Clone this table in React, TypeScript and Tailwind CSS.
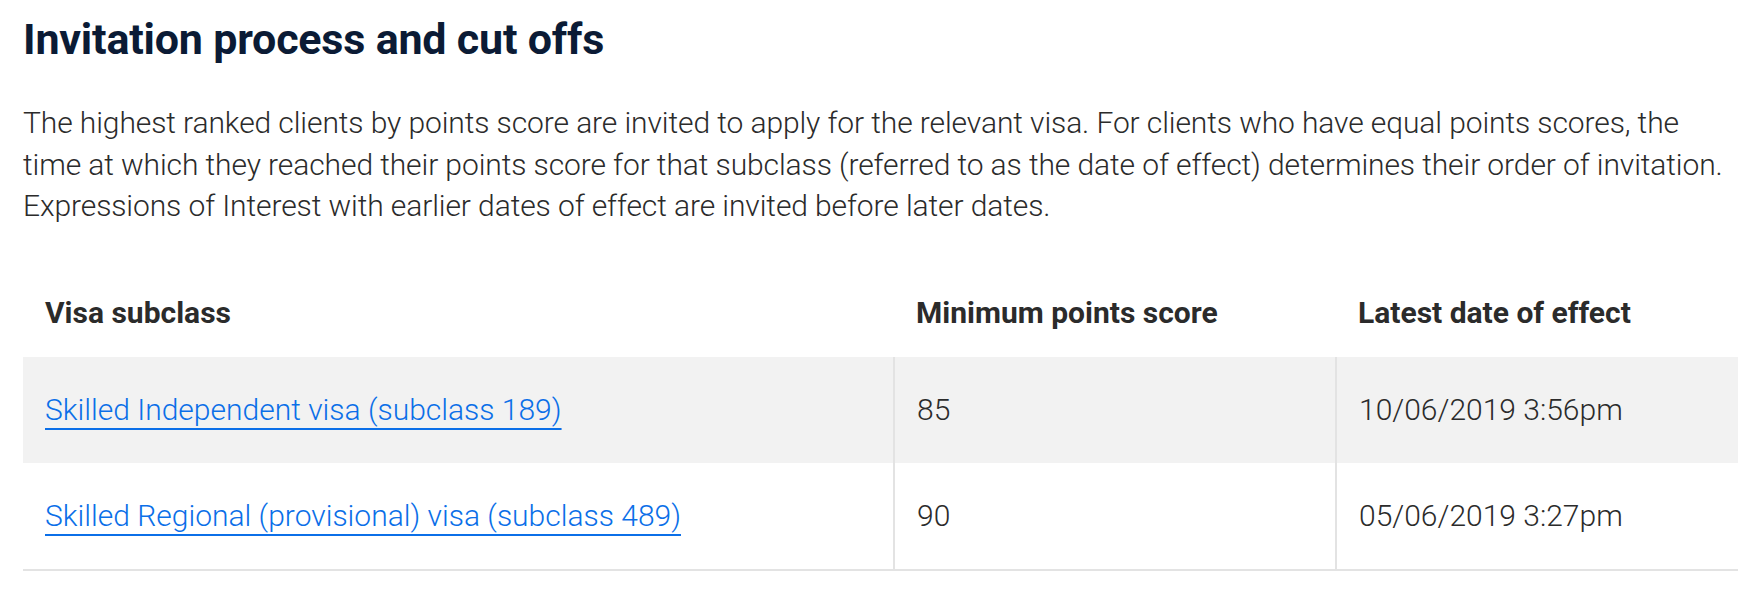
import React from 'react';

const ROWS = [
  { visa: 'Skilled Independent visa (subclass 189)', points: '85', date: '10/06/2019 3:56pm' },
  { visa: 'Skilled Regional (provisional) visa (subclass 489)', points: '90', date: '05/06/2019 3:27pm' },
];

const App: React.FC = () => {
  return (
    <div className="w-[1738px] h-[610px] overflow-hidden bg-white pl-[23px] font-['Roboto',sans-serif]">
      <h1 className="pt-[15px] text-[43px] leading-[48px] font-bold text-[#0b1b35] tracking-[-0.2px]">
        Invitation process and cut offs
      </h1>

      {/* line breaks kept as in the source page */}
      <p className="mt-[39px] whitespace-nowrap text-[30px] leading-[41.5px] tracking-[-0.1px] font-light text-[#2b2b2b]">
        The highest ranked clients by points score are invited to apply for the relevant visa. For clients who have equal points scores, the
        <br />
        time at which they reached their points score for that subclass (referred to as the date of effect) determines their order of invitation.
        <br />
        Expressions of Interest with earlier dates of effect are invited before later dates.
      </p>

      <table className="mt-[42px] w-[1715px] table-fixed border-collapse text-[30px] text-[#2b2b2b]">
        <colgroup>
          <col className="w-[871px]" />
          <col className="w-[442px]" />
          <col className="w-[402px]" />
        </colgroup>
        <thead>
          <tr>
            <th className="px-[22px] py-[24px] text-left font-bold leading-[40px]">Visa subclass</th>
            <th className="px-[22px] py-[24px] text-left font-bold leading-[40px]">Minimum points score</th>
            <th className="px-[22px] py-[24px] text-left font-bold leading-[40px]">Latest date of effect</th>
          </tr>
        </thead>
        <tbody className="font-light">
          {ROWS.map((row, i) => (
            <tr key={row.visa} className={`${i % 2 === 0 ? 'bg-[#f2f2f2]' : 'bg-white'} ${i === ROWS.length - 1 ? 'border-b-2 border-[#e3e3e3]' : ''}`}>
              <td className="px-[22px] py-[33px] leading-[40px]">
                <a href="#" className="text-[#0b6fe8] underline decoration-2 underline-offset-[8px]">
                  {row.visa}
                </a>
              </td>
              <td className="border-l-2 border-[#e3e3e3] px-[22px] py-[33px] leading-[40px]">{row.points}</td>
              <td className="border-l-2 border-[#e3e3e3] px-[22px] py-[33px] leading-[40px]">{row.date}</td>
            </tr>
          ))}
        </tbody>
      </table>
    </div>
  );
};

export default App;
